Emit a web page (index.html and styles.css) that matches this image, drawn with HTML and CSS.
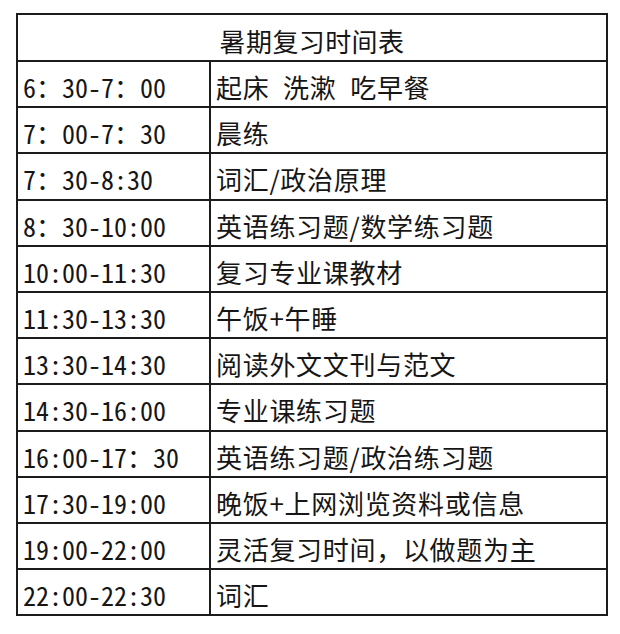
FILE: index.html
```html
<!DOCTYPE html>
<html lang="zh-CN">
<head>
<meta charset="utf-8">
<title>暑期复习时间表</title>
<link rel="stylesheet" href="styles.css">
</head>
<body>
<table class="schedule">
  <colgroup>
    <col class="col-time">
    <col class="col-task">
  </colgroup>
  <thead>
    <tr class="title-row"><th colspan="2">暑期复习时间表</th></tr>
  </thead>
  <tbody>
    <tr><td class="time">6：30-7：00</td><td class="task">起床&ensp;洗漱&ensp;吃早餐</td></tr>
    <tr><td class="time">7：00-7：30</td><td class="task">晨练</td></tr>
    <tr><td class="time">7：30-8:30</td><td class="task">词汇/政治原理</td></tr>
    <tr><td class="time">8：30-10:00</td><td class="task">英语练习题/数学练习题</td></tr>
    <tr><td class="time">10:00-11:30</td><td class="task">复习专业课教材</td></tr>
    <tr><td class="time">11:30-13:30</td><td class="task">午饭+午睡</td></tr>
    <tr><td class="time">13:30-14:30</td><td class="task">阅读外文文刊与范文</td></tr>
    <tr><td class="time">14:30-16:00</td><td class="task">专业课练习题</td></tr>
    <tr><td class="time">16:00-17：30</td><td class="task">英语练习题/政治练习题</td></tr>
    <tr><td class="time">17:30-19:00</td><td class="task">晚饭+上网浏览资料或信息</td></tr>
    <tr><td class="time">19:00-22:00</td><td class="task">灵活复习时间，以做题为主</td></tr>
    <tr><td class="time">22:00-22:30</td><td class="task">词汇</td></tr>
  </tbody>
</table>
</body>
</html>
```

FILE: styles.css
```css
html, body {
  margin: 0;
  padding: 0;
  background: #ffffff;
}

.schedule {
  margin: 13px 0 0 16px;
  width: 592px;
  border-collapse: collapse;
  border: 2px solid #1c1c1c;
  font-family: "Noto Sans CJK SC", "Noto Sans", sans-serif;
  font-size: 26px;
  color: #161616;
  table-layout: fixed;
}

.col-time {
  width: 193px;
}

.schedule th,
.schedule td {
  border: 2px solid #1c1c1c;
  padding: 6px 0 0 5px;
  line-height: 34px;
  text-align: left;
  vertical-align: middle;
  font-weight: 400;
  white-space: nowrap;
  overflow: hidden;
}

.title-row th {
  height: 39px;
  text-align: center;
  padding-left: 0;
  letter-spacing: 0.4px;
}

.schedule td {
  height: 38.2px;
}

.schedule .time {
  font-feature-settings: "hwid" 1;
}

.schedule .task {
  letter-spacing: 0.7px;
}
```
